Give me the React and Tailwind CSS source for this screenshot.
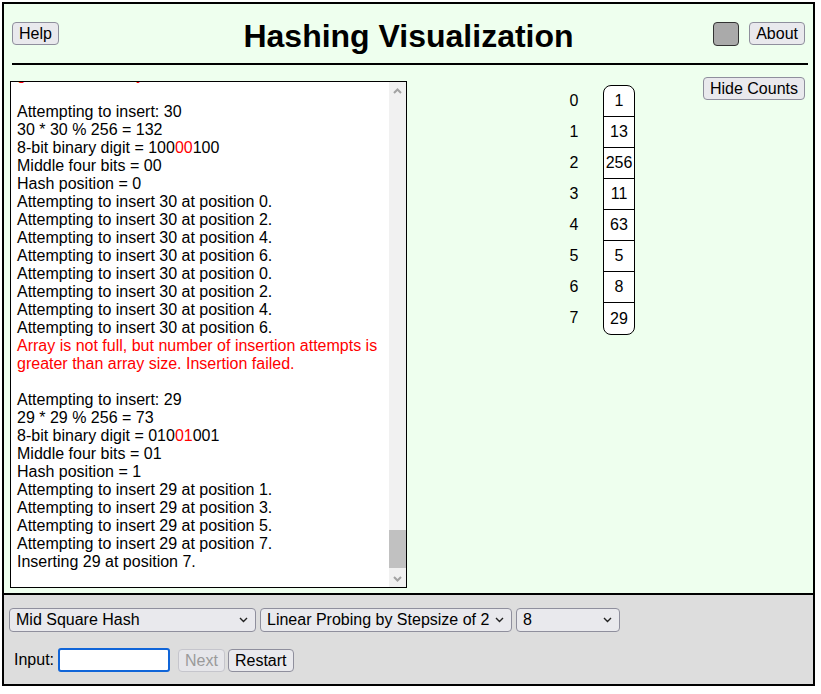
import React from "react";

const btn =
    "h-[23px] px-[6px] border border-[#8f8f9d] rounded-[4px] bg-[#e9e9ed] text-[16px] leading-[19px] text-black";

const attempts30 = [0, 2, 4, 6, 0, 2, 4, 6];
const attempts29 = [1, 3, 5, 7];
const table = [1, 13, 256, 11, 63, 5, 8, 29];

function Line({ children, red }) {
    return (
        <div className={`h-[18px] leading-[18px] whitespace-nowrap ${red ? "text-[#ff0000]" : "text-black"}`}>
            {children}
        </div>
    );
}

function Chevron({ up }) {
    return (
        <svg width="9" height="6" viewBox="0 0 9 6">
            <path
                d={up ? "M1 5 L4.5 1.5 L8 5" : "M1 1 L4.5 4.5 L8 1"}
                fill="none"
                stroke="#a3a3a3"
                strokeWidth="2"
            />
        </svg>
    );
}

function Select({ label, width }) {
    return (
        <div
            className={`h-[24px] flex items-center justify-between pl-[6px] pr-[7px] border border-[#8f8f9d] rounded-[4px] bg-[#e9e9ed] text-[16px] text-black ${width}`}
        >
            <span className="whitespace-nowrap">{label}</span>
            <svg width="9" height="6" viewBox="0 0 9 6">
                <path d="M1 1 L4.5 4.5 L8 1" fill="none" stroke="#222" strokeWidth="1.4" />
            </svg>
        </div>
    );
}

export default function App() {
    return (
        <div
            className="w-[821px] h-[694px] bg-white text-black"
            style={{ fontFamily: '"Liberation Sans", Arial, sans-serif' }}
        >
            <div className="ml-[2px] mt-[2px] w-[813px] border-2 border-black">
                {/* upper green area */}
                <div className="h-[591px] bg-[#eeffee] border-b-2 border-black flex flex-col">
                    <div className="h-[59px] px-[8px] grid grid-cols-[1fr_auto_1fr] items-center">
                        <div className="flex">
                            <button className={btn}>Help</button>
                        </div>
                        <h1 className="text-[32px] font-bold leading-[37px] mt-[5px]">Hashing Visualization</h1>
                        <div className="flex items-center justify-end gap-[10px]">
                            <div className="w-[26px] h-[24px] bg-[#aaaaaa] border border-[#333] rounded-[4px]" />
                            <button className={btn}>About</button>
                        </div>
                    </div>
                    <div className="ml-[8px] mr-[5px] h-[2px] bg-black" />

                    <div className="flex items-start">
                        {/* log */}
                        <div className="ml-[6px] mt-[16px] w-[397px] h-[507px] border border-black bg-white flex overflow-hidden">
                            <div className="flex-1 overflow-hidden pl-[6px] text-[16px]">
                                <div className="-mt-[16px]">
                                    <Line red>greater than array size. Insertion failed.</Line>
                                    <div className="h-[19px]" />
                                    <Line>Attempting to insert: 30</Line>
                                    <Line>30 * 30 % 256 = 132</Line>
                                    <Line>
                                        8-bit binary digit = 100<span className="text-[#ff0000]">00</span>100
                                    </Line>
                                    <Line>Middle four bits = 00</Line>
                                    <Line>Hash position = 0</Line>
                                    {attempts30.map((p, i) => (
                                        <Line key={i}>Attempting to insert 30 at position {p}.</Line>
                                    ))}
                                    <Line red>Array is not full, but number of insertion attempts is</Line>
                                    <Line red>greater than array size. Insertion failed.</Line>
                                    <Line />
                                    <Line>Attempting to insert: 29</Line>
                                    <Line>29 * 29 % 256 = 73</Line>
                                    <Line>
                                        8-bit binary digit = 010<span className="text-[#ff0000]">01</span>001
                                    </Line>
                                    <Line>Middle four bits = 01</Line>
                                    <Line>Hash position = 1</Line>
                                    {attempts29.map((p, i) => (
                                        <Line key={i}>Attempting to insert 29 at position {p}.</Line>
                                    ))}
                                    <Line>Inserting 29 at position 7.</Line>
                                </div>
                            </div>
                            <div className="w-[17px] h-full bg-[#f1f1f1] flex flex-col">
                                <div className="h-[17px] flex items-center justify-center">
                                    <Chevron up />
                                </div>
                                <div className="flex-1">
                                    <div className="mt-[431px] h-[38px] bg-[#c1c1c1]" />
                                </div>
                                <div className="h-[17px] flex items-center justify-center">
                                    <Chevron />
                                </div>
                            </div>
                        </div>

                        {/* table */}
                        <div className="ml-[157px] mt-[20px] flex">
                            <div className="w-[20px] flex flex-col text-[16px]">
                                {table.map((_, i) => (
                                    <div key={i} className="h-[31px] flex items-center justify-center">
                                        {i}
                                    </div>
                                ))}
                            </div>
                            <div className="ml-[19px] w-[32px] border border-black rounded-[8px] bg-white overflow-hidden">
                                {table.map((v, i) => (
                                    <div
                                        key={i}
                                        className={`h-[31px] flex items-center justify-center text-[16px] ${
                                            i < table.length - 1 ? "border-b border-black" : ""
                                        }`}
                                    >
                                        {v}
                                    </div>
                                ))}
                            </div>
                        </div>

                        <button className={`${btn} ml-auto mr-[8px] mt-[12px]`}>Hide Counts</button>
                    </div>
                </div>

                {/* controls */}
                <div className="h-[89px] bg-[#dddddd] pt-[13px] pl-[5px]">
                    <div className="flex gap-[4px]">
                        <Select label="Mid Square Hash" width="w-[247px]" />
                        <Select label="Linear Probing by Stepsize of 2" width="w-[252px]" />
                        <Select label="8" width="w-[104px]" />
                    </div>
                    <div className="mt-[16px] ml-[5px] flex items-center text-[16px]">
                        <span>Input:</span>
                        <div className="ml-[4px] w-[112px] h-[24px] border-2 border-[#1065d8] rounded-[3px] bg-white" />
                        <button
                            disabled
                            className="ml-[8px] h-[23px] px-[6px] border border-[#c5c5cc] rounded-[4px] bg-[#e6e6ea] text-[16px] leading-[19px] text-[#9a9a9a]"
                        >
                            Next
                        </button>
                        <button className={`${btn} ml-[3px]`}>Restart</button>
                    </div>
                </div>
            </div>
        </div>
    );
}
